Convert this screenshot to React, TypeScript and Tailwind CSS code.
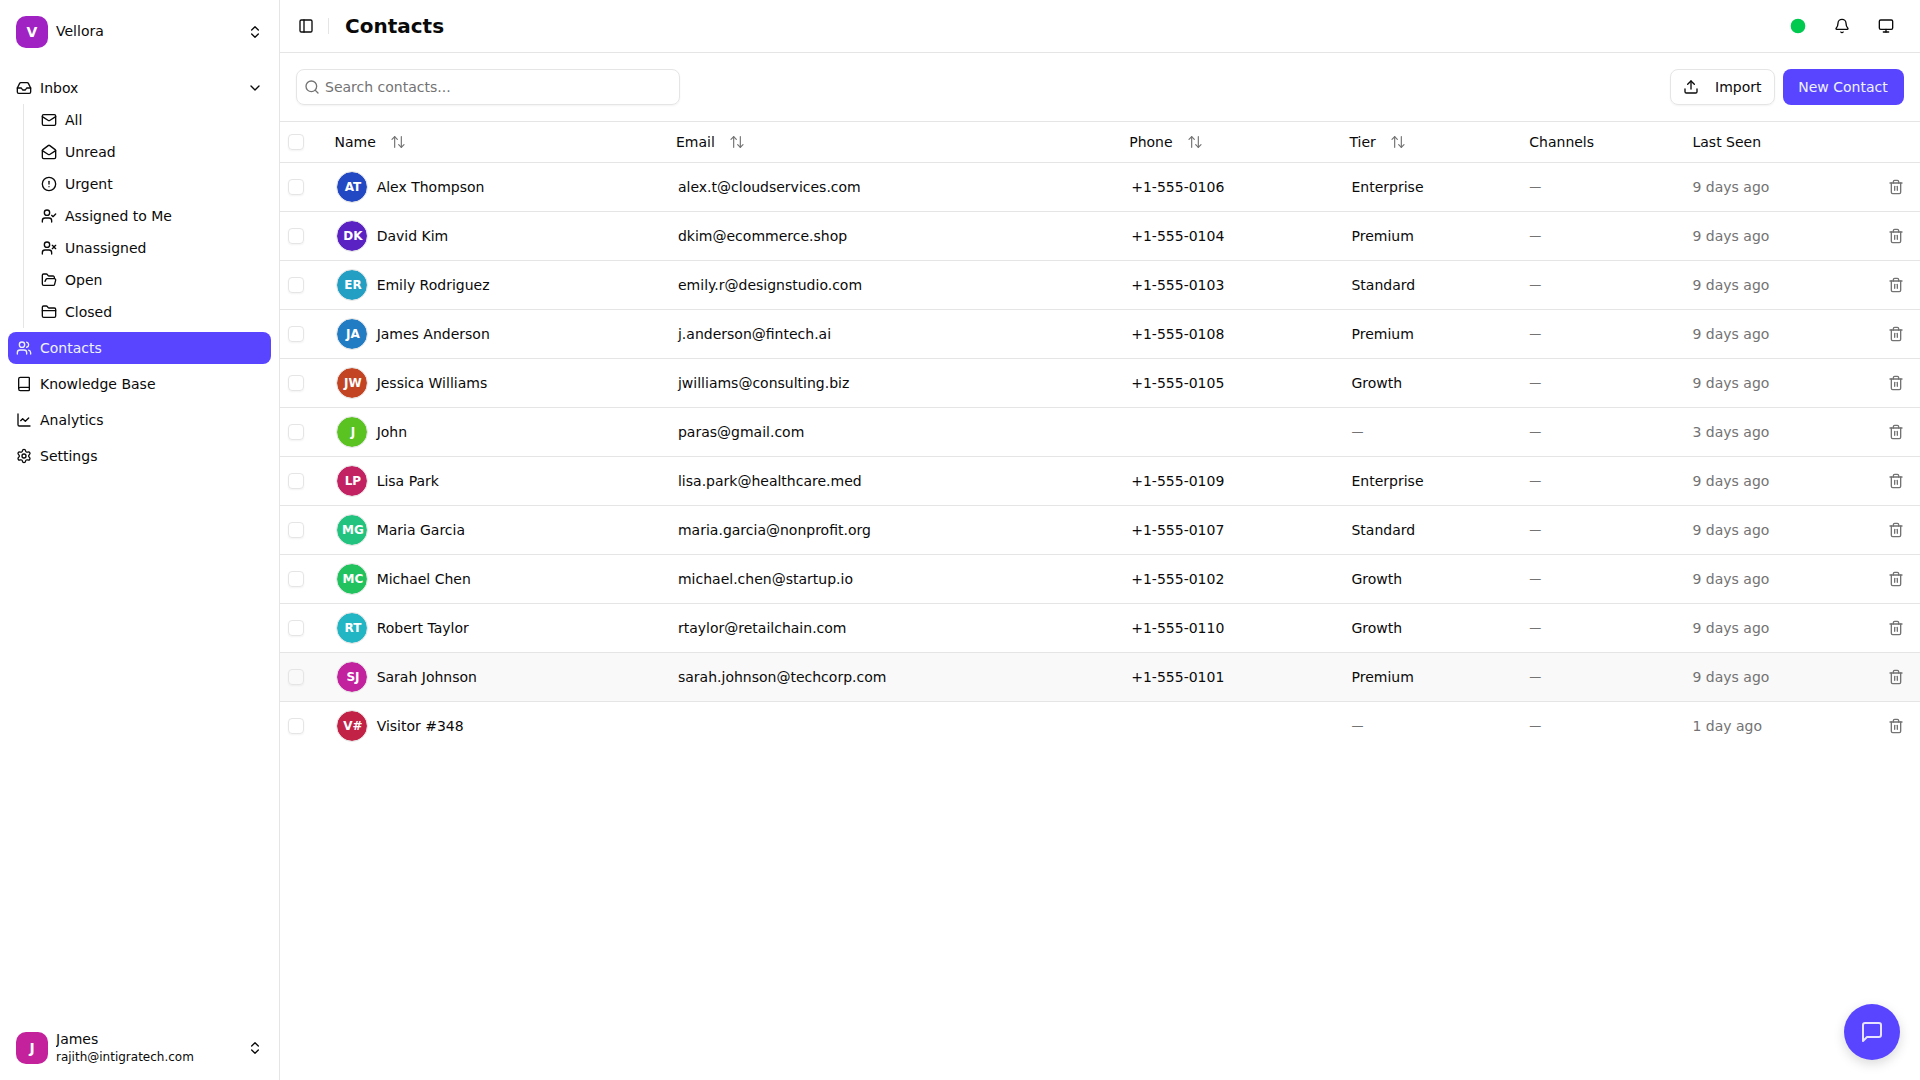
import React from "react";
import {
  ArrowUpDown,
  Bell,
  Book,
  ChartLine,
  ChevronDown,
  ChevronsUpDown,
  Circle,
  CircleAlert,
  FolderClosed,
  FolderOpen,
  Inbox,
  Mail,
  MailOpen,
  Monitor,
  PanelLeft,
  Search,
  Settings,
  Trash2,
  Upload,
  UserCheck,
  Users,
  UserX,
  type LucideIcon,
} from "lucide-react";

const inboxItems: { label: string; icon: LucideIcon }[] = [
  { label: "All", icon: Mail },
  { label: "Unread", icon: MailOpen },
  { label: "Urgent", icon: CircleAlert },
  { label: "Assigned to Me", icon: UserCheck },
  { label: "Unassigned", icon: UserX },
  { label: "Open", icon: FolderOpen },
  { label: "Closed", icon: FolderClosed },
];

const mainItems: { label: string; icon: LucideIcon; active?: boolean }[] = [
  { label: "Contacts", icon: Users, active: true },
  { label: "Knowledge Base", icon: Book },
  { label: "Analytics", icon: ChartLine },
  { label: "Settings", icon: Settings },
];

type Contact = {
  initials: string;
  color: string;
  name: string;
  email: string;
  phone: string;
  tier: string;
  seen: string;
  hovered?: boolean;
};

const contacts: Contact[] = [
  { initials: "AT", color: "bg-[#2249c3]", name: "Alex Thompson", email: "alex.t@cloudservices.com", phone: "+1-555-0106", tier: "Enterprise", seen: "9 days ago" },
  { initials: "DK", color: "bg-[#5a22c3]", name: "David Kim", email: "dkim@ecommerce.shop", phone: "+1-555-0104", tier: "Premium", seen: "9 days ago" },
  { initials: "ER", color: "bg-[#229fc3]", name: "Emily Rodriguez", email: "emily.r@designstudio.com", phone: "+1-555-0103", tier: "Standard", seen: "9 days ago" },
  { initials: "JA", color: "bg-[#227cc3]", name: "James Anderson", email: "j.anderson@fintech.ai", phone: "+1-555-0108", tier: "Premium", seen: "9 days ago" },
  { initials: "JW", color: "bg-[#c34422]", name: "Jessica Williams", email: "jwilliams@consulting.biz", phone: "+1-555-0105", tier: "Growth", seen: "9 days ago" },
  { initials: "J", color: "bg-[#5ac322]", name: "John", email: "paras@gmail.com", phone: "", tier: "", seen: "3 days ago" },
  { initials: "LP", color: "bg-[#c32262]", name: "Lisa Park", email: "lisa.park@healthcare.med", phone: "+1-555-0109", tier: "Enterprise", seen: "9 days ago" },
  { initials: "MG", color: "bg-[#22c37f]", name: "Maria Garcia", email: "maria.garcia@nonprofit.org", phone: "+1-555-0107", tier: "Standard", seen: "9 days ago" },
  { initials: "MC", color: "bg-[#22c35f]", name: "Michael Chen", email: "michael.chen@startup.io", phone: "+1-555-0102", tier: "Growth", seen: "9 days ago" },
  { initials: "RT", color: "bg-[#22b5c3]", name: "Robert Taylor", email: "rtaylor@retailchain.com", phone: "+1-555-0110", tier: "Growth", seen: "9 days ago" },
  { initials: "SJ", color: "bg-[#c3229f]", name: "Sarah Johnson", email: "sarah.johnson@techcorp.com", phone: "+1-555-0101", tier: "Premium", seen: "9 days ago", hovered: true },
  { initials: "V#", color: "bg-[#c32247]", name: "Visitor #348", email: "", phone: "", tier: "", seen: "1 day ago" },
];

const columns =
  "grid grid-cols-[54.45px_341.55px_453.25px_220.25px_179.8px_163.2px_1fr] items-center";

function Checkbox() {
  return (
    <div className="pl-2">
      <div className="size-4 rounded-[4px] border border-[#e5e5e5] shadow-xs" />
    </div>
  );
}

function SortableHead({ label }: { label: string }) {
  return (
    <div className="flex items-center gap-3.5">
      <span>{label}</span>
      <ArrowUpDown className="size-4 text-[#737373]" strokeWidth={1.75} />
    </div>
  );
}

function EmptyValue() {
  return <span className="block text-xs text-[#737373]">—</span>;
}

function Sidebar() {
  return (
    <aside className="flex w-[280px] shrink-0 flex-col border-r border-[#e5e5e5] bg-white">
      <div className="flex h-16 items-center gap-2 px-4">
        <div className="flex size-8 items-center justify-center rounded-[10px] bg-[#a022c3] text-sm font-bold text-white">
          V
        </div>
        <span className="grow pb-[3px]">Vellora</span>
        <ChevronsUpDown className="size-4" />
      </div>

      <nav className="flex flex-col gap-1 px-2 pt-2">
        <div>
          <div className="flex h-8 items-center gap-2 px-2">
            <Inbox className="size-4" />
            <span className="grow">Inbox</span>
            <ChevronDown className="size-4" />
          </div>
          <div className="ml-[15px] border-l border-[#e5e5e5] pl-[17px]">
            {inboxItems.map(({ label, icon: Icon }) => (
              <div key={label} className="flex h-8 items-center gap-2">
                <Icon className="size-4" />
                <span>{label}</span>
              </div>
            ))}
          </div>
        </div>
        {mainItems.map(({ label, icon: Icon, active }) => (
          <div
            key={label}
            className={
              active
                ? "flex h-8 items-center gap-2 rounded-lg bg-[#5945ff] px-2 text-[#eef2ff]"
                : "flex h-8 items-center gap-2 rounded-lg px-2"
            }
          >
            <Icon className="size-4" />
            <span>{label}</span>
          </div>
        ))}
      </nav>

      <div className="mt-auto flex h-16 items-center gap-2 px-4">
        <div className="flex size-8 items-center justify-center rounded-[10px] bg-[#c3229c] text-sm font-bold text-white">
          J
        </div>
        <div className="grow">
          <div className="truncate leading-[17.5px]">James</div>
          <div className="truncate text-xs leading-4">rajith@intigratech.com</div>
        </div>
        <ChevronsUpDown className="size-4" />
      </div>
    </aside>
  );
}

function TopBar() {
  return (
    <header className="flex h-[53px] shrink-0 items-center border-b border-[#e5e5e5] pr-[26px] pl-[18px]">
      <PanelLeft className="size-4" />
      <div className="ml-3.5 h-4 w-px bg-[#e5e5e5]" />
      <h1 className="ml-4 text-xl font-bold">Contacts</h1>
      <div className="ml-auto flex items-center gap-7">
        <Circle className="size-4 fill-[#00c950] text-[#00c950]" />
        <Bell className="size-4" />
        <Monitor className="size-4" />
      </div>
    </header>
  );
}

function Toolbar() {
  return (
    <div className="flex h-[69px] shrink-0 items-center border-b border-[#e5e5e5] px-4">
      <div className="flex h-9 w-96 items-center gap-[5px] rounded-lg border border-[#e5e5e5] px-[7px] text-[#737373] shadow-xs">
        <Search className="size-4" />
        <span>Search contacts...</span>
      </div>
      <button className="ml-auto flex h-9 w-[105px] items-center gap-4 rounded-lg border border-[#e5e5e5] pl-3 shadow-xs">
        <Upload className="size-4" />
        <span>Import</span>
      </button>
      <button className="ml-2 flex h-9 w-[121px] items-center justify-center rounded-lg bg-[#5945ff] pr-px text-[#eef2ff]">
        New Contact
      </button>
    </div>
  );
}

function ContactRow({ contact, last }: { contact: Contact; last: boolean }) {
  return (
    <div
      className={`${columns} ${last ? "h-12" : "h-[49px] border-b border-[#e5e5e5]"} ${
        contact.hovered ? "bg-[#f9f9f9]" : ""
      }`}
    >
      <Checkbox />
      <div className="flex items-center gap-2 pl-0.5">
        <div
          className={`flex size-8 items-center justify-center rounded-full border border-[#e5e5e5] bg-clip-padding pl-px text-xs font-bold text-white ${contact.color}`}
        >
          {contact.initials}
        </div>
        <span className="pl-[0.2px]">{contact.name}</span>
      </div>
      <div className="pl-0.5">{contact.email}</div>
      <div className="pl-0.5">{contact.phone}</div>
      <div className="pl-0.5">{contact.tier || <EmptyValue />}</div>
      <EmptyValue />
      <div className="flex items-center justify-between pr-4 text-[#737373]">
        <span>{contact.seen}</span>
        <Trash2 className="size-4" />
      </div>
    </div>
  );
}

export default function App() {
  return (
    <div className="flex h-screen w-full overflow-hidden bg-white font-['DejaVu_Sans',sans-serif] text-sm text-[#0a0a0a]">
      <Sidebar />
      <main className="flex min-w-0 grow flex-col">
        <TopBar />
        <Toolbar />
        <div className={`${columns} h-[41px] border-b border-[#e5e5e5]`}>
          <Checkbox />
          <SortableHead label="Name" />
          <SortableHead label="Email" />
          <SortableHead label="Phone" />
          <SortableHead label="Tier" />
          <div>Channels</div>
          <div>Last Seen</div>
        </div>
        {contacts.map((contact, i) => (
          <ContactRow
            key={contact.name}
            contact={contact}
            last={i === contacts.length - 1}
          />
        ))}
      </main>
      <button className="fixed right-5 bottom-5 flex size-14 items-center justify-center rounded-full bg-[#5945ff] text-[#e6e2ff] shadow-[0_4px_12px_rgba(0,0,0,0.15)]">
        <svg
          className="size-6"
          viewBox="0 0 24 24"
          fill="none"
          stroke="currentColor"
          strokeWidth={2}
          strokeLinecap="round"
          strokeLinejoin="round"
        >
          <path d="M21 15a2 2 0 0 1-2 2H7l-4 4V5a2 2 0 0 1 2-2h14a2 2 0 0 1 2 2z" />
        </svg>
      </button>
    </div>
  );
}
